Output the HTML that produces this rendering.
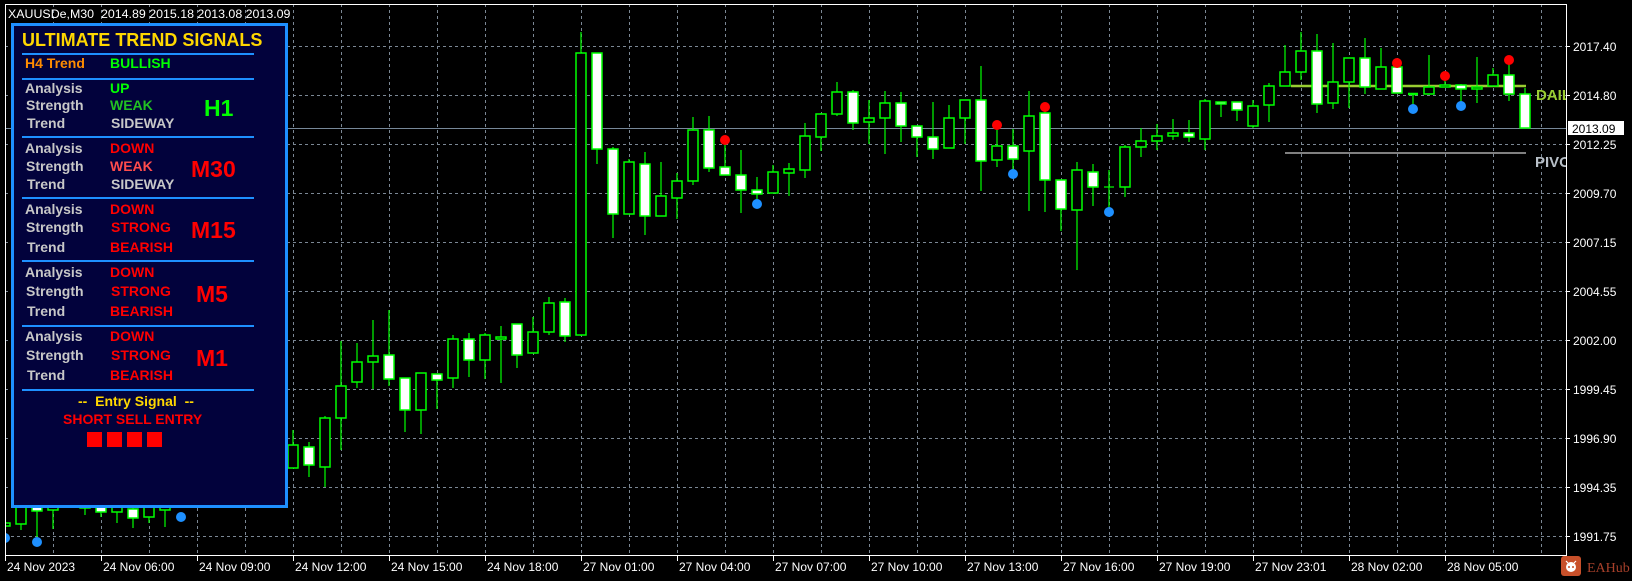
<!DOCTYPE html>
<html><head><meta charset="utf-8"><style>
html,body{margin:0;padding:0;background:#000;width:1632px;height:581px;overflow:hidden;font-family:"Liberation Sans",sans-serif}
svg{position:absolute;left:0;top:0}
.o{fill:#000;stroke:#00ff00;stroke-width:1.5}
.w{fill:#fff;stroke:#00ff00;stroke-width:1.5}
.k{stroke:#00ff00;stroke-width:1.2}
#panel{position:absolute;left:11px;top:23px;width:271px;height:479px;border:3px solid #1e90ff;background:#02023c}
.t{position:absolute;font-weight:bold;font-size:14px;line-height:16px;white-space:nowrap}
.l{color:#c8c8c8}
.sep{position:absolute;left:22px;width:232px;height:2px;background:#1e90ff}
.big{position:absolute;font-weight:bold;font-size:23px;line-height:26px}
.sq{position:absolute;top:432px;width:15px;height:15px;background:#ff0000}
.ax{font-size:12px;fill:#fff;font-family:"Liberation Sans",sans-serif}
</style></head><body>
<svg width="1632" height="581" xmlns="http://www.w3.org/2000/svg">
<defs>
<pattern id="vg" x="5" y="4" width="48" height="6" patternUnits="userSpaceOnUse"><rect x="0" y="0" width="1" height="3" fill="#7b8794"/></pattern>
<clipPath id="cc"><rect x="5" y="4" width="1561" height="551"/></clipPath>
</defs>
<rect x="5" y="4" width="1561" height="551" fill="url(#vg)"/>
<g stroke="#7b8794" stroke-width="1" stroke-dasharray="3,3">
<path d="M5 46.5H1566M5 95.5H1566M5 144.5H1566M5 193.5H1566M5 242.5H1566M5 291.5H1566M5 340.5H1566M5 389.5H1566M5 438.5H1566M5 487.5H1566M5 536.5H1566"/>
</g>
<path d="M5 128.5H1566" stroke="#778899" stroke-width="1"/>
<g clip-path="url(#cc)">
<path d="M1291 86H1526" stroke="#9acd32" stroke-width="2.5"/>
<path d="M1285 153H1526" stroke="#808080" stroke-width="2"/>
<text x="1536" y="100" font-size="15" font-weight="bold" fill="#9acd32" font-family="Liberation Sans,sans-serif">DAIL</text>
<text x="1535" y="167" font-size="15" font-weight="bold" fill="#b8c0c8" font-family="Liberation Sans,sans-serif">PIVO</text>
<path class="k" d="M5 519V530M21 500V530M37 495V537M53 498V529M85 500V515M101 495V517M117 497V523M133 505V528M149 500V523M165 500V527"/>
<rect class="o" x="0" y="523" width="10" height="3"/><rect class="o" x="16" y="505" width="10" height="19"/><rect class="w" x="32" y="500" width="10" height="11"/><rect class="o" x="48" y="500" width="10" height="10"/><rect class="o" x="80" y="504" width="10" height="4"/><rect class="w" x="96" y="500" width="10" height="12"/><rect class="o" x="112" y="502" width="10" height="10"/><rect class="w" x="128" y="509" width="10" height="9"/><rect class="o" x="144" y="505" width="10" height="12"/><rect class="o" x="160" y="505" width="10" height="5"/>
<path class="k" d="M293 430V468M309 442V477M325 416V487M341 341V450M357 343V388M373 320V389M389 310V386M405 378V432M421 373V434M437 374V409M453 335V388M469 333V377M485 333V379M501 326V383M517 324V368M533 317V353M549 297V335M565 298V342M581 32V336M597 53V164M613 147V238M629 159V214M645 152V235M661 162V216M677 173V219M693 117V185M709 116V172M725 140V175M741 150V213M757 177V204M773 165V193M789 163V196M805 123V178M821 113V151M837 82V116M853 90V130M869 100V144M885 91V154M901 92V142M917 126V157M933 102V159M949 105V148M965 100V144M981 66V191M997 125V167M1013 129V174M1029 91V211M1045 107V212M1061 180V231M1077 162V270M1093 164V206M1109 170V210M1125 145V197M1141 128V157M1157 124V150M1173 119V140M1189 120V142M1205 99V150M1221 102V117M1237 102V121M1253 100V128M1269 83V122M1285 45V86M1301 32V80M1317 34V113M1333 43V109M1349 58V108M1365 38V94M1381 48V89M1397 63V93M1413 94V109M1429 55V94M1445 76V87M1461 84V106M1477 57V103M1493 68V86M1509 60V101M1525 88V128"/>
<rect class="o" x="288" y="445" width="10" height="23"/>
<rect class="w" x="304" y="447" width="10" height="18"/>
<rect class="o" x="320" y="418" width="10" height="49"/>
<rect class="o" x="336" y="386" width="10" height="32"/>
<rect class="o" x="352" y="362" width="10" height="20"/>
<rect class="o" x="368" y="356" width="10" height="6"/>
<rect class="w" x="384" y="355" width="10" height="24"/>
<rect class="w" x="400" y="378" width="10" height="32"/>
<rect class="o" x="416" y="373" width="10" height="37"/>
<rect class="w" x="432" y="374" width="10" height="6"/>
<rect class="o" x="448" y="339" width="10" height="39"/>
<rect class="w" x="464" y="339" width="10" height="21"/>
<rect class="o" x="480" y="335" width="10" height="25"/>
<rect class="o" x="496" y="337" width="10" height="2"/>
<rect class="w" x="512" y="324" width="10" height="31"/>
<rect class="o" x="528" y="332" width="10" height="21"/>
<rect class="o" x="544" y="303" width="10" height="29"/>
<rect class="w" x="560" y="302" width="10" height="34"/>
<rect class="o" x="576" y="53" width="10" height="282"/>
<rect class="w" x="592" y="53" width="10" height="96"/>
<rect class="w" x="608" y="149" width="10" height="65"/>
<rect class="o" x="624" y="162" width="10" height="52"/>
<rect class="w" x="640" y="164" width="10" height="52"/>
<rect class="o" x="656" y="196" width="10" height="20"/>
<rect class="o" x="672" y="181" width="10" height="17"/>
<rect class="o" x="688" y="130" width="10" height="51"/>
<rect class="w" x="704" y="130" width="10" height="38"/>
<rect class="w" x="720" y="167" width="10" height="8"/>
<rect class="w" x="736" y="175" width="10" height="15"/>
<rect class="w" x="752" y="190" width="10" height="4"/>
<rect class="o" x="768" y="172" width="10" height="21"/>
<rect class="o" x="784" y="169" width="10" height="4"/>
<rect class="o" x="800" y="136" width="10" height="34"/>
<rect class="o" x="816" y="114" width="10" height="23"/>
<rect class="o" x="832" y="92" width="10" height="22"/>
<rect class="w" x="848" y="92" width="10" height="31"/>
<rect class="o" x="864" y="118" width="10" height="4"/>
<rect class="o" x="880" y="103" width="10" height="15"/>
<rect class="w" x="896" y="103" width="10" height="23"/>
<rect class="w" x="912" y="126" width="10" height="11"/>
<rect class="w" x="928" y="137" width="10" height="12"/>
<rect class="o" x="944" y="118" width="10" height="30"/>
<rect class="o" x="960" y="100" width="10" height="18"/>
<rect class="w" x="976" y="100" width="10" height="61"/>
<rect class="o" x="992" y="146" width="10" height="14"/>
<rect class="w" x="1008" y="146" width="10" height="13"/>
<rect class="o" x="1024" y="116" width="10" height="35"/>
<rect class="w" x="1040" y="113" width="10" height="67"/>
<rect class="w" x="1056" y="180" width="10" height="29"/>
<rect class="o" x="1072" y="170" width="10" height="40"/>
<rect class="w" x="1088" y="172" width="10" height="15"/>
<path class="k" d="M1104 187H1114"/>
<rect class="o" x="1120" y="147" width="10" height="40"/>
<rect class="o" x="1136" y="141" width="10" height="6"/>
<rect class="o" x="1152" y="136" width="10" height="5"/>
<rect class="o" x="1168" y="133" width="10" height="3"/>
<rect class="w" x="1184" y="133" width="10" height="4"/>
<rect class="o" x="1200" y="101" width="10" height="38"/>
<rect class="w" x="1216" y="102" width="10" height="2"/>
<rect class="w" x="1232" y="102" width="10" height="8"/>
<rect class="o" x="1248" y="106" width="10" height="20"/>
<rect class="o" x="1264" y="86" width="10" height="19"/>
<rect class="o" x="1280" y="72" width="10" height="14"/>
<rect class="o" x="1296" y="51" width="10" height="21"/>
<rect class="w" x="1312" y="51" width="10" height="53"/>
<rect class="o" x="1328" y="82" width="10" height="21"/>
<rect class="o" x="1344" y="58" width="10" height="24"/>
<rect class="w" x="1360" y="58" width="10" height="29"/>
<rect class="o" x="1376" y="67" width="10" height="22"/>
<rect class="w" x="1392" y="67" width="10" height="26"/>
<path d="M1408 94H1418" stroke="#00ff00" stroke-width="2.5"/>
<rect class="o" x="1424" y="87" width="10" height="7"/>
<rect class="o" x="1440" y="85" width="10" height="2"/>
<rect class="w" x="1456" y="85" width="10" height="4"/>
<rect class="o" x="1472" y="87" width="10" height="2"/>
<rect class="o" x="1488" y="75" width="10" height="11"/>
<rect class="w" x="1504" y="75" width="10" height="19"/>
<rect class="w" x="1520" y="94" width="10" height="34"/>
<g fill="#ff0000"><circle cx="725" cy="140" r="5"/><circle cx="997" cy="125" r="5"/><circle cx="1045" cy="107" r="5"/><circle cx="1397" cy="63" r="5"/><circle cx="1445" cy="76" r="5"/><circle cx="1509" cy="60" r="5"/></g>
<g fill="#1e90ff"><circle cx="757" cy="204" r="5"/><circle cx="1013" cy="174" r="5"/><circle cx="1109" cy="212" r="5"/><circle cx="1413" cy="109" r="5"/><circle cx="1461" cy="106" r="5"/><circle cx="5" cy="538" r="5"/><circle cx="37" cy="542" r="5"/><circle cx="181" cy="517" r="5"/></g>
</g>
<rect x="5.5" y="4.5" width="1561" height="551" fill="none" stroke="#fff" stroke-width="1"/>
<g stroke="#fff" stroke-width="1">
<path d="M1566 46.5h4M1566 95.5h4M1566 144.5h4M1566 193.5h4M1566 242.5h4M1566 291.5h4M1566 340.5h4M1566 389.5h4M1566 438.5h4M1566 487.5h4M1566 536.5h4"/>
<path d="M5.5 555v6M101.5 555v6M197.5 555v6M293.5 555v6M389.5 555v6M485.5 555v6M581.5 555v6M677.5 555v6M773.5 555v6M869.5 555v6M965.5 555v6M1061.5 555v6M1157.5 555v6M1253.5 555v6M1349.5 555v6M1445.5 555v6"/>
</g>
<g class="ax">
<text x="1573" y="51">2017.40</text><text x="1573" y="100">2014.80</text><text x="1573" y="149">2012.25</text><text x="1573" y="198">2009.70</text><text x="1573" y="247">2007.15</text><text x="1573" y="296">2004.55</text><text x="1573" y="345">2002.00</text><text x="1573" y="394">1999.45</text><text x="1573" y="443">1996.90</text><text x="1573" y="492">1994.35</text><text x="1573" y="541">1991.75</text>
<text x="7" y="571">24 Nov 2023</text><text x="103" y="571">24 Nov 06:00</text><text x="199" y="571">24 Nov 09:00</text><text x="295" y="571">24 Nov 12:00</text><text x="391" y="571">24 Nov 15:00</text><text x="487" y="571">24 Nov 18:00</text><text x="583" y="571">27 Nov 01:00</text><text x="679" y="571">27 Nov 04:00</text><text x="775" y="571">27 Nov 07:00</text><text x="871" y="571">27 Nov 10:00</text><text x="967" y="571">27 Nov 13:00</text><text x="1063" y="571">27 Nov 16:00</text><text x="1159" y="571">27 Nov 19:00</text><text x="1255" y="571">27 Nov 23:01</text><text x="1351" y="571">28 Nov 02:00</text><text x="1447" y="571">28 Nov 05:00</text>
</g>
<rect x="1568" y="121" width="56" height="14" fill="#fff"/>
<text x="1572" y="133" font-size="12" fill="#000" font-family="Liberation Sans,sans-serif">2013.09</text>
<rect x="1561" y="556" width="20" height="20" rx="3" fill="#c8502a"/>
<circle cx="1571" cy="567" r="5" fill="#fff"/><circle cx="1569" cy="567" r="1" fill="#c8502a"/><circle cx="1573" cy="567" r="1" fill="#c8502a"/>
<path d="M1566 561l2 2M1576 561l-2 2" stroke="#fff" stroke-width="1.2"/>
<text x="1587" y="572" font-size="14" fill="#a8402a" font-family="Liberation Serif,serif">EAHub</text>
<text x="8" y="18" font-size="12.4" fill="#fff" font-family="Liberation Sans,sans-serif">XAUUSDe,M30&#160;&#160;2014.89 2015.18 2013.08 2013.09</text>
</svg>

<div id="panel"></div>
<div class="t" style="left:22px;top:30px;font-size:18px;line-height:20px;color:#ffd700">ULTIMATE TREND SIGNALS</div>
<div class="sep" style="top:53px"></div>
<div class="t" style="left:25px;top:55px;color:#ff8c00">H4 Trend</div>
<div class="t" style="left:110px;top:55px;color:#00ff00">BULLISH</div>
<div class="sep" style="top:78px"></div>
<div class="t l" style="left:25px;top:80px">Analysis</div><div class="t" style="left:110px;top:80px;color:#00ff00">UP</div>
<div class="t l" style="left:26px;top:97px">Strength</div><div class="t" style="left:110px;top:97px;color:#22c022">WEAK</div>
<div class="t l" style="left:27px;top:115px">Trend</div><div class="t l" style="left:111px;top:115px">SIDEWAY</div>
<div class="big" style="left:204px;top:95px;color:#00ff00">H1</div>
<div class="sep" style="top:136px"></div>
<div class="t l" style="left:25px;top:140px">Analysis</div><div class="t" style="left:110px;top:140px;color:#ff0000">DOWN</div>
<div class="t l" style="left:26px;top:158px">Strength</div><div class="t" style="left:110px;top:158px;color:#ff4c4c">WEAK</div>
<div class="t l" style="left:27px;top:176px">Trend</div><div class="t l" style="left:111px;top:176px">SIDEWAY</div>
<div class="big" style="left:191px;top:156px;color:#ff0000">M30</div>
<div class="sep" style="top:197px"></div>
<div class="t l" style="left:25px;top:201px">Analysis</div><div class="t" style="left:110px;top:201px;color:#ff0000">DOWN</div>
<div class="t l" style="left:26px;top:219px">Strength</div><div class="t" style="left:111px;top:219px;color:#ff0000">STRONG</div>
<div class="t l" style="left:27px;top:239px">Trend</div><div class="t" style="left:110px;top:239px;color:#ff0000">BEARISH</div>
<div class="big" style="left:191px;top:217px;color:#ff0000">M15</div>
<div class="sep" style="top:260px"></div>
<div class="t l" style="left:25px;top:264px">Analysis</div><div class="t" style="left:110px;top:264px;color:#ff0000">DOWN</div>
<div class="t l" style="left:26px;top:283px">Strength</div><div class="t" style="left:111px;top:283px;color:#ff0000">STRONG</div>
<div class="t l" style="left:27px;top:303px">Trend</div><div class="t" style="left:110px;top:303px;color:#ff0000">BEARISH</div>
<div class="big" style="left:196px;top:281px;color:#ff0000">M5</div>
<div class="sep" style="top:325px"></div>
<div class="t l" style="left:25px;top:328px">Analysis</div><div class="t" style="left:110px;top:328px;color:#ff0000">DOWN</div>
<div class="t l" style="left:26px;top:347px">Strength</div><div class="t" style="left:111px;top:347px;color:#ff0000">STRONG</div>
<div class="t l" style="left:27px;top:367px">Trend</div><div class="t" style="left:110px;top:367px;color:#ff0000">BEARISH</div>
<div class="big" style="left:196px;top:345px;color:#ff0000">M1</div>
<div class="sep" style="top:389px"></div>
<div class="t" style="left:78px;top:393px;color:#ffd700">--&nbsp; Entry Signal &nbsp;--</div>
<div class="t" style="left:63px;top:411px;color:#ff0000">SHORT SELL ENTRY</div>
<div class="sq" style="left:87px"></div><div class="sq" style="left:107px"></div><div class="sq" style="left:127px"></div><div class="sq" style="left:147px"></div>
</body></html>
